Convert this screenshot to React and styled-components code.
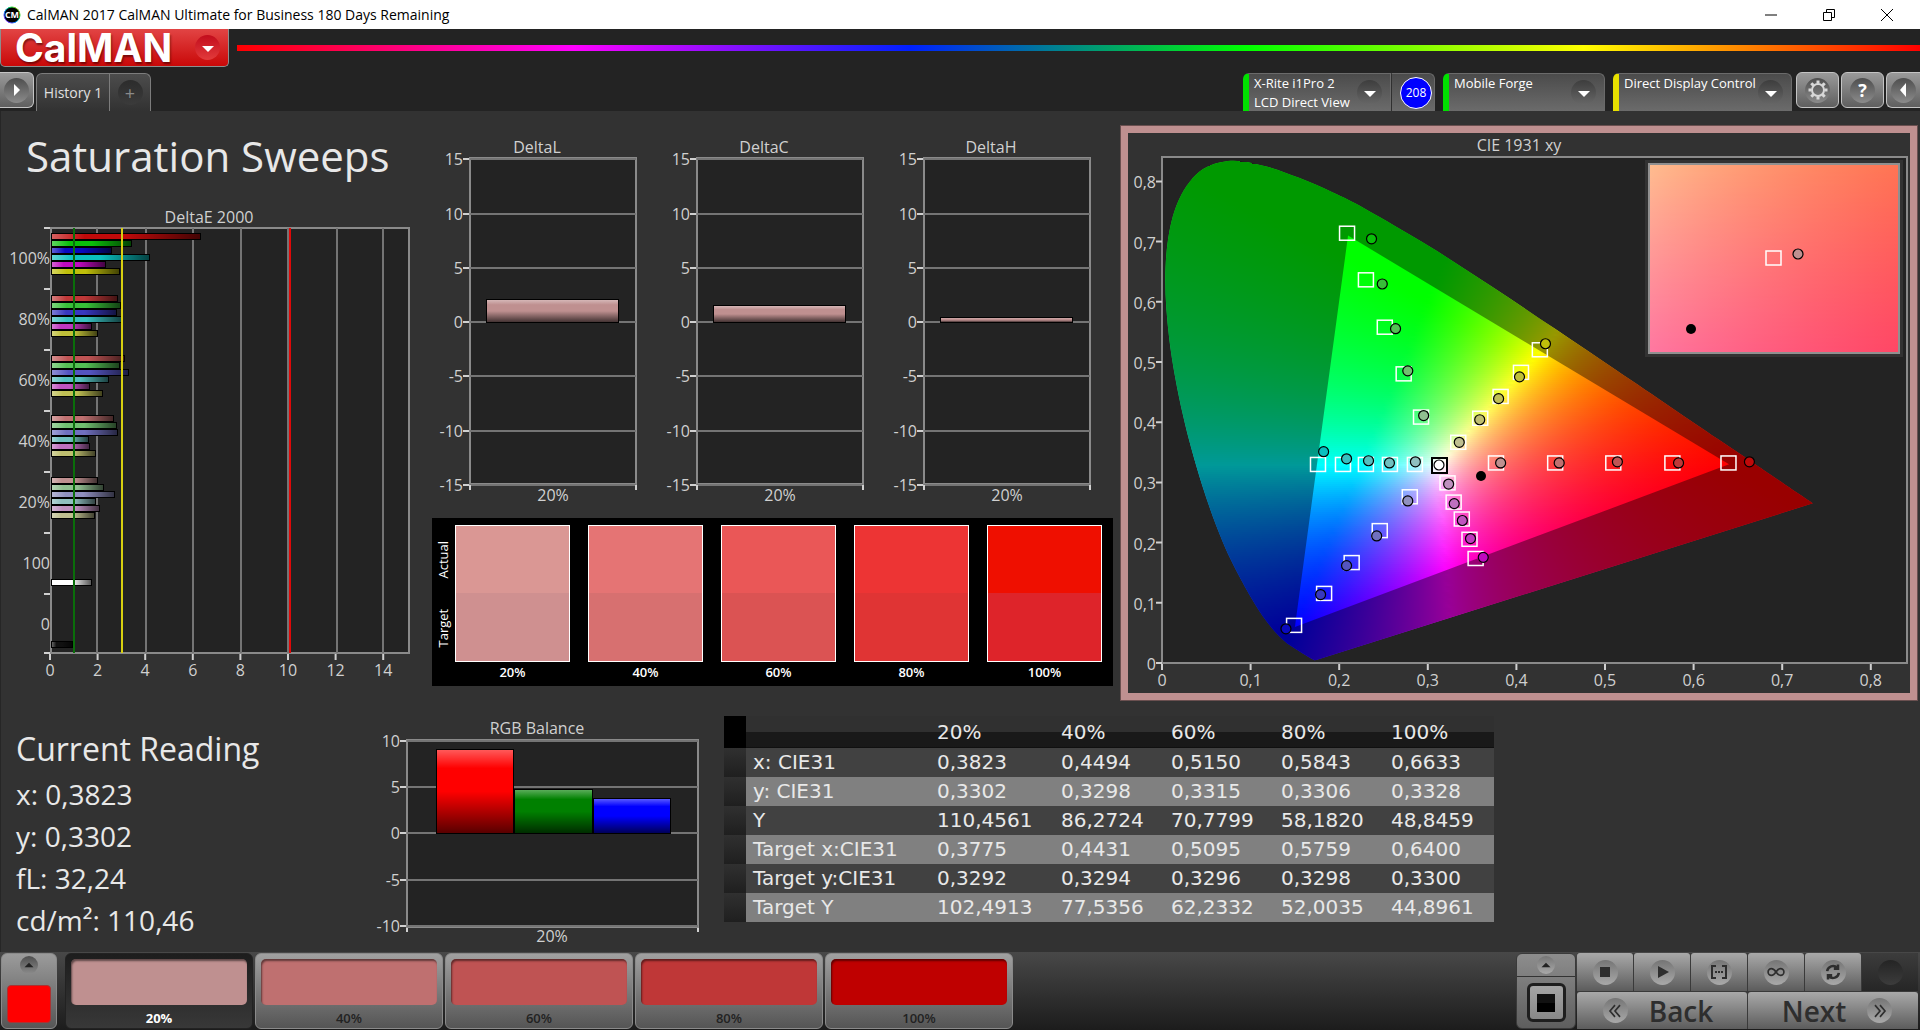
import React, { useState } from 'react'
import styled, { createGlobalStyle } from 'styled-components';

const Global = createGlobalStyle`
   * { box-sizing: border-box; }
   body { margin: 0; background: #323232; }
   body, button { font-family: "Open Sans", "Noto Sans", sans-serif; }
   button { margin: 0; padding: 0; cursor: pointer; }
`

const Screen = styled.div`
   display: flex;
   flex-direction: column;
   min-height: 100vh;
   color: #e8e8e8;
`

/* ---------- title bar ---------- */

const TitleBar = styled.header`
   display: flex;
   align-items: center;
   height: 29px;
   padding-left: 3px;
   gap: 6px;
   background: #fff;
   color: #000;
   font-size: 14px;
   line-height: 24px;
`

const WindowTitle = styled.span`
   flex: 1;
`

const WindowButtons = styled.div`
   display: flex;
   padding-right: 4px;
`

const WindowButton = styled.button`
   display: grid;
   place-items: center;
   width: 58px;
   height: 28px;
   border: 0;
   background: none;
`

/* ---------- toolbar ---------- */

const Toolbar = styled.div`
   background: #232323;
`

const BrandRow = styled.div`
   display: flex;
   align-items: center;
   gap: 8px;
   height: 38px;
`

const Brand = styled.button`
   display: flex;
   align-items: center;
   justify-content: space-between;
   width: 229px;
   height: 38px;
   padding: 0 8px 0 14px;
   border: 1px solid #8d8d8d;
   border-top: 0;
   border-radius: 0 0 5px 5px;
   background: linear-gradient(#e24444, #c90808);
   color: #fff;
   font: 700 39px/36px Inter, sans-serif;
   text-shadow: 1px 2px 2px rgba(60, 0, 0, 0.6);
`

const Rainbow = styled.div`
   flex: 1;
   height: 6px;
   background: linear-gradient(90deg, #f00 0%, #f0f 20%, #0020ff 40%, #0f0 60%, #ff0 80%, #f00 100%);
`

const TabRow = styled.div`
   display: flex;
   align-items: flex-start;
   height: 44px;
   padding-top: 5px;
`

const Spacer = styled.div`
   flex: 1;
`

const SideButton = styled.button`
   display: grid;
   place-items: center;
   width: ${({ $edge }) => ($edge ? '34px' : '43px')};
   height: 36px;
   margin-right: ${({ $edge }) => ($edge ? '0' : '2px')};
   border: 1px solid #c4c4c4;
   border-left-width: ${({ $edge }) => ($edge === 'left' ? '0' : '1px')};
   border-right-width: ${({ $edge }) => ($edge === 'right' ? '0' : '1px')};
   border-radius: ${({ $edge }) => ($edge === 'left' ? '0 6px 6px 0' : $edge === 'right' ? '6px 0 0 6px' : '6px')};
   background: linear-gradient(#9a9a9a, #5f5f5f);
`

const Tabs = styled.div`
   display: flex;
   height: 38px;
   margin: 1px 0 0 2px;
   border: 1px solid #7c7c7c;
   border-bottom: 0;
   border-radius: 6px 6px 0 0;
   background: linear-gradient(#4c4c4c, #323232);
`

const Tab = styled.button`
   display: grid;
   place-items: center;
   width: ${({ $wide }) => ($wide ? '73px' : '40px')};
   border: 0;
   border-right: ${({ $wide }) => ($wide ? '1px solid #7c7c7c' : '0')};
   background: none;
   color: #e0e0e0;
   font-size: 14px;
`

const Device = styled.button`
   display: flex;
   align-items: center;
   width: ${({ $width }) => $width}px;
   height: 38px;
   margin: 1px 8px 0 0;
   padding: 0 8px 0 5px;
   border: 1px solid #6a6a6a;
   border-bottom: 0;
   border-left: 6px solid ${({ $color }) => $color};
   border-radius: 6px 6px 0 0;
   background: linear-gradient(#4b4b4b, #6b6b6b);
   color: #fff;
   font-size: 13px;
   line-height: 19px;
   text-align: left;
`

const DeviceName = styled.span`
   flex: 1;
   height: 38px;
   white-space: nowrap;
`

const DeviceGroup = styled.div`
   display: flex;
   margin-right: 8px;

   ${Device} {
      margin-right: 0;
      border-radius: 6px 0 0 0;
   }
`

const Devices = styled.div`
   display: flex;
   margin-right: -4px;
`

const Counter = styled.button`
   display: grid;
   place-items: center;
   width: 44px;
   height: 38px;
   margin-top: 1px;
   padding-left: 6px;
   border: 1px solid #6a6a6a;
   border-bottom: 0;
   border-left-color: #303030;
   border-radius: 0 6px 0 0;
   background: linear-gradient(#4b4b4b, #6b6b6b);
`

const CounterBadge = styled.span`
   width: 32px;
   height: 32px;
   border: 1px solid #fff;
   border-radius: 50%;
   background: #00f;
   color: #fff;
   font-size: 12px;
   line-height: 30px;
   text-align: center;
`

/* ---------- workspace ---------- */

const Workspace = styled.main`
   flex: 1;
   background: #323232;
   box-shadow: inset 1px 0 #262626;
`

const ChartRow = styled.section`
   display: grid;
   grid-template-columns: 430fr 690fr 800fr;
   align-items: start;
   min-height: 599px;
`

const ReadingRow = styled.section`
   display: grid;
   grid-template-columns: 360fr 364fr 770fr 426fr;
   align-items: start;
`

const PageTitle = styled.h1`
   margin: 0;
   padding-left: 26px;
   font-size: 42px;
   font-weight: 400;
   line-height: 89px;
   white-space: nowrap;
`

const Chart = styled.svg`
   display: block;
   width: 100%;
   height: auto;
   font-family: "Open Sans", "Noto Sans", sans-serif;
   font-size: 16px;
   fill: #d0d0d0;
`

const MiddleColumn = styled.div`
   padding-top: 19px;
`

const DeltaRow = styled.div`
   display: grid;
   grid-template-columns: 227fr 227fr 227fr 9fr;
`

const SwatchPanel = styled.div`
   display: flex;
   gap: 4px;
   margin: 8px 7px 0 2px;
   padding: 7px 11px 0 3px;
   height: 168px;
   background: #000;
   color: #fff;
   font-size: 13px;
   font-weight: 600;
`

const SwatchAxis = styled.div`
   display: flex;
   flex-direction: column;
   width: 16px;
   height: 137px;
`

const AxisWord = styled.span`
   flex: 1;
   writing-mode: vertical-rl;
   transform: rotate(180deg);
   line-height: 16px;
   text-align: center;
   font-weight: 400;
`

const SwatchGrid = styled.div`
   flex: 1;
   display: grid;
   grid-template-columns: repeat(5, 1fr);
   column-gap: 18px;
`

const SwatchCell = styled.figure`
   margin: 0;
   text-align: center;
   line-height: 20px;
`

const SwatchColor = styled.div`
   height: 137px;
   border: 1px solid #fff;
   background: linear-gradient(${({ $actual, $target }) => `${$actual} 50%, ${$target} 50%`});
`

const CiePanel = styled.div`
   margin: 14px 2px 0 0;
   border: 8px solid #bf9090;
   outline: 1px solid #6b5050;
   outline-offset: -1px;
`

const Reading = styled.dl`
   margin: 0;
   padding: 18px 0 0 16px;
   font-size: 28px;
   line-height: 42px;
`

const ReadingTitle = styled.dt`
   padding-bottom: 3px;
   font-size: 32px;
`

const ReadingLine = styled.dd`
   margin: 0;
`

const DataTable = styled.table`
   width: 100%;
   margin-top: 6px;
   border-collapse: collapse;
   table-layout: fixed;
   font-family: "DejaVu Sans", sans-serif;
   font-size: 20px;
   line-height: 29px;
   text-align: left;
   white-space: nowrap;

   th, td {
      padding: 0 0 0 7px;
      font-weight: 400;
   }
`

const HeadRow = styled.tr`
   height: 32px;
   background: linear-gradient(#303030 0 50%, #191919 50% 95%, #0c0c0c);

   & > :first-child { background: #000; }
`

const BodyRow = styled.tr`
   background: ${({ $light }) => ($light ? '#808080' : '#414141')};

   & > :first-child { background: linear-gradient(#303030, #1f1f1f); }
`

const Col = styled.col`
   width: ${({ $share }) => ($share * 100) / 770}%;
`

/* ---------- footer ---------- */

const Footer = styled.footer`
   display: flex;
   gap: 2px;
   height: 78px;
   padding: 1px 2px 1px 1px;
   background: linear-gradient(#484848, #1c1c1c);
`

const PatternButton = styled.button`
   display: flex;
   flex-direction: column;
   align-items: center;
   justify-content: space-between;
   width: 56px;
   margin-right: 6px;
   padding: 2px 0 5px;
   border: 1px solid #8a8a8a;
   border-radius: 6px;
   background: linear-gradient(#9b9b9b, #565656);
`

const PatternColor = styled.span`
   width: 44px;
   height: 38px;
   border: 1px solid #a33;
   border-radius: 4px;
   background: #f00;
`

const LevelButton = styled.button`
   width: 188px;
   padding: 5px 6px 0;
   border: 1px solid ${({ $active }) => ($active ? '#222' : '#8a8a8a')};
   border-radius: 6px;
   background: ${({ $active }) => ($active ? 'linear-gradient(#1d1d1d, #383838)' : 'linear-gradient(#a0a0a0, #555)')};
   color: ${({ $active }) => ($active ? '#fff' : '#222')};
   font-size: 13px;
   font-weight: ${({ $active }) => ($active ? 700 : 600)};
   line-height: 26px;
`

const LevelColor = styled.span`
   display: block;
   width: 176px;
   height: 46px;
   margin-left: -1px;
   border-radius: 5px;
   background: ${({ $color }) => $color};
   box-shadow: inset 1px 2px 2px rgba(0, 0, 0, 0.5);
`

const WindowSize = styled.div`
   display: flex;
   flex-direction: column;
   width: 60px;
   border: 1px solid #3a3a3a;
   border-radius: 6px;
   background: linear-gradient(#8d8d8d, #5e5e5e);
   overflow: hidden;
`

const SizeButton = styled.button`
   display: grid;
   place-items: center;
   flex: ${({ $grow }) => ($grow ? 1 : '0 0 22px')};
   border: 0;
   border-top: ${({ $grow }) => ($grow ? '1px solid #333' : '0')};
   background: none;
`

const SizeFrame = styled.span`
   display: grid;
   place-items: center;
   width: 39px;
   height: 39px;
   border: 3px solid #1e1e1e;
   border-radius: 6px;
   background: linear-gradient(#a5a5a5, #888);

   &::after {
      content: '';
      width: 18px;
      height: 18px;
      background: linear-gradient(#111 50%, #000 50%);
   }
`

const Transport = styled.div`
   display: grid;
   grid-template-columns: repeat(6, 56px);
   grid-template-rows: 38px 37px;
   gap: 1px;
   margin-left: -1px;
   background: #3a3a3a;
`

const TransportButton = styled.button`
   display: flex;
   align-items: center;
   justify-content: center;
   gap: 21px;
   grid-column: span ${({ $span }) => $span || 1};
   padding: ${({ $lean }) => ($lean === 'left' ? '0 8px 0 0' : $lean === 'right' ? '0 0 0 8px' : '0')};
   border: 0;
   border-radius: 3px 3px 0 0;
   background: ${({ disabled }) => (disabled ? 'linear-gradient(#3c3c3c, #262626)' : 'linear-gradient(#a9a9a9, #5c5c5c)')};
   color: #2e2e2e;
   font-size: 28px;
   font-weight: 600;
   line-height: 36px;
`

/* round dimple that sits behind most of the small icons */
const Dimple = styled.span`
   display: grid;
   place-items: center;
   width: ${({ $size }) => $size || 25}px;
   height: ${({ $size }) => $size || 25}px;
   border-radius: 50%;
   background: ${({ $tone }) => tones[$tone || 'grey']};
   color: ${({ $tone }) => ($tone === 'flat' ? '#8a8a8a' : '#fff')};
   font-size: 18px;
   font-weight: 400;
   line-height: 24px;
`

const tones = {
   grey: 'linear-gradient(#4e4e4e, #8b8b8b)',
   dark: 'linear-gradient(#3d3d3d, #676767)',
   light: 'linear-gradient(#757575, #a9a9a9)',
   red: 'linear-gradient(#c20c1c, #e23b3b)',
   flat: 'linear-gradient(#2c2c2c, #3b3b3b)',
   off: 'linear-gradient(#242424, #3c3c3c)',
}

const Icon = ({ d, size = 24, fill = 'none', stroke = 'none', width = 2 }) => (
   <svg width={size} height={size} viewBox="0 0 24 24" fill={fill} stroke={stroke} strokeWidth={width} aria-hidden="true">
      <path d={d} />
   </svg>
)

const icons = {
   down: 'M6 10h12l-6 6z',
   up: 'M6 15h12l-6-6z',
   right: 'M9 6v12l6-6z',
   left: 'M14 5v14l-6-7z',
   stop: 'M7 7h10v10H7z',
   play: 'M8 6v12l11-6z',
   range: 'M9 6H5v12h4M15 6h4v12h-4M8 12h2M11 12h2M14 12h2',
   loop: 'M12 12c-2-3-3.500-4-5.500-4a4 4 0 0 0 0 8c2 0 3.500-1 5.500-4s3.500-4 5.500-4a4 4 0 0 1 0 8c-2 0-3.500-1-5.500-4z',
   refresh: 'M5 11a7 7 0 0 1 12-4M19 13a7 7 0 0 1-12 4M18 3v5h-5M6 21v-5h5',
   back: 'M12 5l-6 7 6 7M18 5l-6 7 6 7',
   next: 'M6 5l6 7-6 7M12 5l6 7-6 7',
}

const Gear = () => (
   <svg width="22" height="22" viewBox="-11 -11 22 22" fill="none" stroke="#d8d8d8" aria-hidden="true">
      <circle r="6" strokeWidth="2" />
      {[0, 45, 90, 135, 180, 225, 270, 315].map(a => (
         <path key={a} d="M0-6.500V-9.500" strokeWidth="3" transform={`rotate(${a})`} />
      ))}
   </svg>
)

const AppIcon = () => (
   <svg width="18" height="18" viewBox="0 0 18 18" aria-hidden="true">
      <defs>
         <linearGradient id="ring" x1="0" y1="1" x2="1" y2="0">
            <stop offset="0" stopColor="#a0f" />
            <stop offset="0.4" stopColor="#08f" />
            <stop offset="0.7" stopColor="#0d4" />
            <stop offset="1" stopColor="#fb0" />
         </linearGradient>
      </defs>
      <circle cx="9" cy="9" r="8" fill="#000" stroke="url(#ring)" strokeWidth="1" />
      <text x="9" y="12" textAnchor="middle" fontSize="9" fontWeight="700" fontFamily="Open Sans" fill="#fff">CM</text>
   </svg>
)

/* ---------- data ---------- */

const low = { '20%': 144, '40%': 112, '60%': 84, '80%': 56, '100%': 10 }

const hues = ['red', 'green', 'blue', 'cyan', 'magenta', 'yellow']
const masks = {
   red: [1, 0, 0],
   green: [0, 1, 0],
   blue: [0, 0, 1],
   cyan: [0, 1, 1],
   magenta: [1, 0, 1],
   yellow: [1, 1, 0],
}

const shade = (hue, level) => `rgb(${masks[hue].map(on => (on ? 191 : low[level])).join(',')})`

const levels = [
   { name: '20%', color: '#bf9090', actual: '#da9794', target: '#cf9090' },
   { name: '40%', color: '#bf7070', actual: '#e57474', target: '#d77070' },
   { name: '60%', color: '#bf5353', actual: '#ea5757', target: '#db5353' },
   { name: '80%', color: '#bf3737', actual: '#ed3434', target: '#e03434' },
   { name: '100%', color: '#bf0000', actual: '#ef0f00', target: '#de242a' },
]

/* right edge of every DeltaE bar, in chart units */
const deltaE = [
   { name: '100%', top: 233, ends: [201, 132, 112, 150, 106, 120] },
   { name: '80%', top: 295, ends: [118, 121, 117, 122, 92, 98] },
   { name: '60%', top: 355, ends: [125, 120, 129, 109, 90, 103] },
   { name: '40%', top: 415, ends: [114, 117, 118, 89, 90, 96] },
   { name: '20%', top: 477, ends: [98, 104, 115, 96, 100, 95] },
]

const deltas = [
   { title: 'DeltaL', value: 2.1 },
   { title: 'DeltaC', value: 1.6 },
   { title: 'DeltaH', value: 0.5 },
]

const columns = ['20%', '40%', '60%', '80%', '100%']
const rows = [
   ['x: CIE31', '0,3823', '0,4494', '0,5150', '0,5843', '0,6633'],
   ['y: CIE31', '0,3302', '0,3298', '0,3315', '0,3306', '0,3328'],
   ['Y', '110,4561', '86,2724', '70,7799', '58,1820', '48,8459'],
   ['Target x:CIE31', '0,3775', '0,4431', '0,5095', '0,5759', '0,6400'],
   ['Target y:CIE31', '0,3292', '0,3294', '0,3296', '0,3298', '0,3300'],
   ['Target Y', '102,4913', '77,5356', '62,2332', '52,0035', '44,8961'],
]

/* [target x, target y, measured x, measured y] from 20% to 100% */
const sweeps = {
   green: [
      [0.2918, 0.4085, 0.2953, 0.411], [0.2722, 0.4803, 0.2774, 0.4853], [0.2509, 0.5578, 0.2636, 0.5553],
      [0.2296, 0.6365, 0.2486, 0.6296], [0.2083, 0.7139, 0.2365, 0.7046],
   ],
   yellow: [
      [0.3338, 0.3666, 0.3355, 0.3666], [0.3586, 0.4066, 0.3586, 0.4041], [0.3816, 0.4428, 0.3799, 0.4391],
      [0.4046, 0.4828, 0.4035, 0.4753], [0.4259, 0.5203, 0.4328, 0.5303],
   ],
   cyan: [
      [0.2849, 0.3298, 0.286, 0.3342], [0.2567, 0.3298, 0.2567, 0.3323], [0.2296, 0.3298, 0.2331, 0.336],
      [0.2037, 0.3298, 0.2083, 0.3392], [0.1755, 0.3298, 0.1824, 0.351],
   ],
   red: [
      [0.3764, 0.3323, 0.3822, 0.3323], [0.4432, 0.3323, 0.4483, 0.3323], [0.5088, 0.3323, 0.514, 0.3342],
      [0.5755, 0.3323, 0.583, 0.3323], [0.6388, 0.3323, 0.663, 0.3342],
   ],
   magenta: [
      [0.3217, 0.2992, 0.3235, 0.2973], [0.3286, 0.2673, 0.3298, 0.2648], [0.3378, 0.2392, 0.339, 0.2367],
      [0.3465, 0.2055, 0.3482, 0.2067], [0.3534, 0.1736, 0.3626, 0.1755],
   ],
   blue: [
      [0.2791, 0.2761, 0.2774, 0.2692], [0.2452, 0.2199, 0.2423, 0.2111], [0.2135, 0.1668, 0.2083, 0.1618],
      [0.1824, 0.1156, 0.179, 0.1137], [0.1485, 0.0625, 0.1399, 0.0568],
   ],
}

const locus = [
   [0.1741, 0.005], [0.1714, 0.0051], [0.1644, 0.0109], [0.1566, 0.0177], [0.144, 0.0297], [0.1355, 0.0399],
   [0.1241, 0.0578], [0.1096, 0.0868], [0.0913, 0.1327], [0.0687, 0.2007], [0.0454, 0.295], [0.0235, 0.4127],
   [0.0082, 0.5384], [0.0039, 0.6548], [0.0139, 0.7502], [0.0389, 0.812], [0.0743, 0.8338], [0.1142, 0.8262],
   [0.1547, 0.8059], [0.1929, 0.7816], [0.2296, 0.7543], [0.3016, 0.6923], [0.3731, 0.6245], [0.4441, 0.5547],
   [0.5125, 0.4866], [0.5752, 0.4242], [0.627, 0.3725], [0.6658, 0.334], [0.6915, 0.3083], [0.719, 0.2809],
   [0.7347, 0.2653],
]

const px = x => 1162 + 886 * x
const py = y => 663 - 602 * y

/* linear sRGB of a chromaticity, brightest channel at full */
const chroma = (x, y) => {
   const X = x / y
   const Z = (1 - x - y) / y
   const rgb = [
      3.2406 * X - 1.5372 - 0.4986 * Z,
      -0.9689 * X + 1.8758 + 0.0415 * Z,
      0.0557 * X - 0.204 + 1.057 * Z,
   ].map(v => Math.max(v, 0))
   const top = Math.max(...rgb)
   return `rgb(${rgb.map(v => Math.round((255 * v) / top)).join(',')})`
}

const smooth = pts => {
   let d = `M${pts[0]}`
   for (let i = 0; i < pts.length - 1; i++) {
      const a = pts[i - 1] || pts[i]
      const b = pts[i]
      const c = pts[i + 1]
      const e = pts[i + 2] || c
      d += `C${b[0] + (c[0] - a[0]) / 6},${b[1] + (c[1] - a[1]) / 6} ${c[0] - (e[0] - b[0]) / 6},${c[1] - (e[1] - b[1]) / 6} ${c[0]},${c[1]}`
   }
   return d + 'Z'
}

const locusPath = smooth(locus.map(([x, y]) => [px(x), py(y)]))
const gamutPath = `M${px(0.64)},${py(0.33)}L${px(0.21)},${py(0.71)}L${px(0.15)},${py(0.06)}Z`

/* horizontal extent of the locus at a height */
const span = y => {
   const hits = []
   locus.forEach((p, i) => {
      const q = locus[(i + 1) % locus.length]
      if ((p[1] - y) * (q[1] - y) <= 0 && p[1] !== q[1]) {
         hits.push(p[0] + ((y - p[1]) / (q[1] - p[1])) * (q[0] - p[0]))
      }
   })
   return hits.length ? [Math.min(...hits) - 0.01, Math.max(...hits) + 0.01] : null
}

/* the colour field is painted as thin strips, each with its own gradient */
const strips = []
for (let top = 158; top < 664; top += 2) {
   const y = Math.min(Math.max((663 - top - 1) / 602, 0.006), 0.833)
   const [x1, x2] = span(y) || [0.02, 0.14]
   const count = Math.ceil((x2 - x1) / 0.01)
   const stops = Array.from({ length: count + 1 }, (_, i) => chroma(x1 + ((x2 - x1) * i) / count, y))
   strips.push({ top, left: px(x1), width: px(x2) - px(x1), stops })
}

const insetStrips = Array.from({ length: 95 }, (_, r) => {
   const y = 0.3292 + (258 - (164 + 2 * r + 1)) / 3534
   return {
      top: 164 + 2 * r,
      left: 1649,
      width: 250,
      stops: Array.from({ length: 13 }, (_, i) => chroma(0.3775 + (1649 + (250 * i) / 12 - 1773) / 5200, y)),
   }
})

/* ---------- charts ---------- */

const Strips = ({ id, list }) => list.map((s, n) => (
   <React.Fragment key={n}>
      <linearGradient id={`${id}${n}`}>
         {s.stops.map((color, i) => (
            <stop key={i} offset={i / (s.stops.length - 1)} stopColor={color} />
         ))}
      </linearGradient>
      <rect x={s.left} y={s.top} width={s.width} height="2" fill={`url(#${id}${n})`} shapeRendering="crispEdges" />
   </React.Fragment>
))

const Gloss = ({ id, vertical }) => (
   <linearGradient id={id} x1="0" y1="0" x2={vertical ? 0 : 1} y2={vertical ? 1 : 0}>
      <stop offset="0" stopColor="#fff" stopOpacity="0.35" />
      <stop offset="0.22" stopColor="#fff" stopOpacity="0" />
      <stop offset="0.5" stopColor="#000" stopOpacity="0" />
      <stop offset="1" stopColor="#000" stopOpacity="0.65" />
   </linearGradient>
)

const Bar = ({ x, y, w, h, color, gloss }) => (
   <g>
      <rect x={x} y={y} width={w} height={h} fill="#000" />
      <rect x={x + 1} y={y + 1} width={w - 2} height={h - 2} fill={color} />
      <rect x={x + 1} y={y + 1} width={w - 2} height={h - 2} fill={`url(#${gloss})`} />
   </g>
)

const GridLine = ({ d }) => <path d={d} stroke="#747474" strokeWidth="2" fill="none" />
const Tick = ({ d }) => <path d={d} stroke="#d0d0d0" strokeWidth="2" fill="none" />

const DeltaEChart = () => {
   const names = ['100%', '80%', '60%', '40%', '20%', '100', '0']
   return (
      <Chart viewBox="0 200 430 510" role="img" aria-label="DeltaE 2000">
         <Gloss id="glossAcross" />
         <text x="209" y="223" textAnchor="middle">DeltaE 2000</text>
         <rect x="51" y="228" width="358" height="425" fill="#232323" stroke="#8a8a8a" strokeWidth="2" />
         {[97, 146, 193, 241, 288, 337, 383].map(x => <GridLine key={x} d={`M${x} 228V653`} />)}
         {[228, 289, 350, 411, 472, 533, 594, 653].map(y => <Tick key={y} d={`M44 ${y}h6`} />)}
         {names.map((name, i) => (
            <text key={i} x="50" y={264 + 61 * i} textAnchor="end">{name}</text>
         ))}
         {[0, 2, 4, 6, 8, 10, 12, 14].map(v => (
            <g key={v}>
               <Tick d={`M${50 + 24 * v - v * 0.2} 654v6`} />
               <text x={50 + 24 * v - v * 0.2} y="676" textAnchor="middle">{v}</text>
            </g>
         ))}
         {deltaE.map(group => group.ends.map((end, i) => (
            <Bar key={group.name + i} x={51} y={group.top + 7 * i} w={end - 51} h={7} color={shade(hues[i], group.name)} gloss="glossAcross" />
         )))}
         <Bar x={51} y={579} w={41} h={7} color="#fff" gloss="glossAcross" />
         <Bar x={51} y={641} w={22} h={7} color="#111" gloss="glossAcross" />
         <path d="M74 228V653" stroke="#0a6e0a" strokeWidth="2" />
         <path d="M122 228V653" stroke="#d8d010" strokeWidth="2" />
         <path d="M290 228V653" stroke="#e00808" strokeWidth="2" />
      </Chart>
   )
}

const DeltaChart = ({ title, value }) => {
   const gloss = `gloss${title}`
   const at = v => 322 - 11 * v + v * 0.15
   return (
      <Chart viewBox="0 130 227 380" role="img" aria-label={title}>
         <Gloss id={gloss} vertical />
         <text x="107" y="153" textAnchor="middle">{title}</text>
         <rect x="40" y="158" width="166" height="326" fill="#232323" stroke="#8a8a8a" strokeWidth="2" />
         {[15, 10, 5, 0, -5, -10, -15].map(v => (
            <g key={v}>
               <GridLine d={`M40 ${Math.round(at(v))}h166`} />
               <Tick d={`M33 ${Math.round(at(v))}h6`} />
               <text x="33" y={at(v) + 6} textAnchor="end">{v}</text>
            </g>
         ))}
         <Tick d="M40 485v5M206 485v5" />
         <text x="123" y="501" textAnchor="middle">20%</text>
         <Bar x={56} y={Math.round(at(value))} w={133} h={323 - Math.round(at(value))} color="#bf9090" gloss={gloss} />
      </Chart>
   )
}

const RgbChart = () => (
   <Chart viewBox="360 710 364 242" role="img" aria-label="RGB Balance">
      <Gloss id="glossRgb" vertical />
      <text x="537" y="734" textAnchor="middle">RGB Balance</text>
      <rect x="407" y="740" width="291" height="187" fill="#232323" stroke="#8a8a8a" strokeWidth="2" />
      {[[10, 741], [5, 787], [0, 833], [-5, 880], [-10, 926]].map(([v, y]) => (
         <g key={v}>
            <GridLine d={`M407 ${y}h291`} />
            <Tick d={`M400 ${y}h6`} />
            <text x="400" y={y + 6} textAnchor="end">{v}</text>
         </g>
      ))}
      <Tick d="M407 928v4M698 928v4" />
      <text x="552" y="942" textAnchor="middle">20%</text>
      <Bar x={436} y={749} w={78} h={85} color="#f00" gloss="glossRgb" />
      <Bar x={514} y={789} w={79} h={45} color="#008000" gloss="glossRgb" />
      <Bar x={593} y={798} w={78} h={36} color="#00f" gloss="glossRgb" />
   </Chart>
)

const Target = ({ x, y }) => (
   <rect x={x - 7} y={y - 7} width="15" height="14" fill="none" stroke="#fff" strokeWidth="1.5" />
)

const Measured = ({ x, y, fill }) => <circle cx={x} cy={y} r="5" fill={fill} stroke="#000" strokeWidth="1.2" />

const CieChart = () => (
   <Chart viewBox="1128 133 782 560" role="img" aria-label="CIE 1931 xy">
      <clipPath id="locus"><path d={locusPath} /></clipPath>
      <text x="1519" y="151" textAnchor="middle">CIE 1931 xy</text>
      <rect x="1162" y="157" width="745" height="506" fill="#232323" stroke="#8a8a8a" strokeWidth="2" />
      <g clipPath="url(#locus)">
         <Strips id="field" list={strips} />
         <path d={`${locusPath}${gamutPath}`} fill="#000" fillOpacity="0.4" fillRule="evenodd" />
      </g>
      {[0, 1, 2, 3, 4, 5, 6, 7, 8].map(v => (
         <g key={v}>
            <Tick d={`M${px(v / 10)} 664v6M1156 ${py(v / 10)}h6`} />
            <text x={px(v / 10)} y="686" textAnchor="middle">{v ? `0,${v}` : 0}</text>
            <text x="1156" y={py(v / 10) + 7} textAnchor="end">{v ? `0,${v}` : 0}</text>
         </g>
      ))}
      {hues.map(hue => sweeps[hue].map(([x, y], i) => <Target key={hue + i} x={px(x)} y={py(y)} />))}
      <rect x="1432" y="458" width="15" height="15" fill="none" stroke="#000" strokeWidth="2" />
      <rect x="1434" y="460" width="11" height="11" fill="none" stroke="#fff" strokeWidth="1" />
      {hues.map(hue => sweeps[hue].map(([, , x, y], i) => (
         <Measured key={hue + i} x={px(x)} y={py(y)} fill={shade(hue, columns[i])} />
      )))}
      <Measured x={1439} y={465} fill="#fff" />
      <circle cx="1481" cy="476" r="5" fill="#000" />

      <rect x="1645" y="160" width="258" height="197" fill="#323232" />
      <Strips id="inset" list={insetStrips} />
      <rect x="1649" y="164" width="250" height="189" fill="none" stroke="#909090" strokeWidth="2" />
      <Target x={1773} y={258} />
      <Measured x={1798} y={254} fill="#bf9090" />
      <circle cx="1691" cy="329" r="5" fill="#000" />
   </Chart>
)

/* ---------- page ---------- */

const App = () => {

   const [active, setActive] = useState('20%')

   return (
      <>
         <Global />
         <Screen>
            <TitleBar>
               <AppIcon />
               <WindowTitle>CalMAN 2017 CalMAN Ultimate for Business 180 Days Remaining</WindowTitle>
               <WindowButtons>
                  <WindowButton aria-label="Minimize"><Icon d="M6 12h12" stroke="#000" width={1} /></WindowButton>
                  <WindowButton aria-label="Restore"><Icon d="M6.500 9.500h8v8h-8zM9.500 9V6.500h8v8H15" stroke="#000" width={1} /></WindowButton>
                  <WindowButton aria-label="Close"><Icon d="M6 6l12 12M18 6L6 18" stroke="#000" width={1} /></WindowButton>
               </WindowButtons>
            </TitleBar>

            <Toolbar>
               <BrandRow>
                  <Brand>CalMAN <Dimple $tone="red"><Icon d={icons.down} fill="#fff" /></Dimple></Brand>
                  <Rainbow />
               </BrandRow>
               <TabRow>
                  <SideButton $edge="left" aria-label="Run"><Dimple><Icon d={icons.right} fill="#fff" /></Dimple></SideButton>
                  <Tabs>
                     <Tab $wide>History 1</Tab>
                     <Tab aria-label="Add tab"><Dimple $tone="flat">+</Dimple></Tab>
                  </Tabs>
                  <Spacer />
                  <Devices>
                     <DeviceGroup>
                        <Device $width={148} $color="#00e000">
                           <DeviceName>X-Rite i1Pro 2<br />LCD Direct View</DeviceName>
                           <Dimple $tone="dark"><Icon d={icons.down} fill="#fff" /></Dimple>
                        </Device>
                        <Counter><CounterBadge>208</CounterBadge></Counter>
                     </DeviceGroup>
                     <Device $width={162} $color="#00e000">
                        <DeviceName>Mobile Forge</DeviceName>
                        <Dimple $tone="dark"><Icon d={icons.down} fill="#fff" /></Dimple>
                     </Device>
                     <Device $width={179} $color="#e8e000">
                        <DeviceName>Direct Display Control</DeviceName>
                        <Dimple $tone="dark"><Icon d={icons.down} fill="#fff" /></Dimple>
                     </Device>
                  </Devices>
                  <SideButton aria-label="Settings"><Dimple><Gear /></Dimple></SideButton>
                  <SideButton aria-label="Help"><Dimple><b>?</b></Dimple></SideButton>
                  <SideButton $edge="right" aria-label="Collapse"><Dimple><Icon d={icons.left} fill="#fff" /></Dimple></SideButton>
               </TabRow>
            </Toolbar>

            <Workspace>
               <ChartRow>
                  <div>
                     <PageTitle>Saturation Sweeps</PageTitle>
                     <DeltaEChart />
                  </div>
                  <MiddleColumn>
                     <DeltaRow>
                        {deltas.map(d => <DeltaChart key={d.title} {...d} />)}
                     </DeltaRow>
                     <SwatchPanel>
                        <SwatchAxis>
                           <AxisWord>Actual</AxisWord>
                           <AxisWord>Target</AxisWord>
                        </SwatchAxis>
                        <SwatchGrid>
                           {levels.map(l => (
                              <SwatchCell key={l.name}>
                                 <SwatchColor $actual={l.actual} $target={l.target} />
                                 <figcaption>{l.name}</figcaption>
                              </SwatchCell>
                           ))}
                        </SwatchGrid>
                     </SwatchPanel>
                  </MiddleColumn>
                  <CiePanel><CieChart /></CiePanel>
               </ChartRow>

               <ReadingRow>
                  <Reading>
                     <ReadingTitle>Current Reading</ReadingTitle>
                     <ReadingLine>x: 0,3823</ReadingLine>
                     <ReadingLine>y: 0,3302</ReadingLine>
                     <ReadingLine>fL: 32,24</ReadingLine>
                     <ReadingLine>cd/m²: 110,46</ReadingLine>
                  </Reading>
                  <RgbChart />
                  <DataTable>
                     <colgroup>
                        {[22, 184, 124, 110, 110, 110, 110].map((share, i) => <Col key={i} $share={share} />)}
                     </colgroup>
                     <thead>
                        <HeadRow>
                           <th />
                           <th />
                           {columns.map(c => <th key={c} scope="col">{c}</th>)}
                        </HeadRow>
                     </thead>
                     <tbody>
                        {rows.map(([name, ...cells], i) => (
                           <BodyRow key={name} $light={i % 2 === 1}>
                              <td />
                              <th scope="row">{name}</th>
                              {cells.map((c, n) => <td key={n}>{c}</td>)}
                           </BodyRow>
                        ))}
                     </tbody>
                  </DataTable>
               </ReadingRow>
            </Workspace>

            <Footer>
               <PatternButton aria-label="Pattern colour">
                  <Dimple $size={18}><Icon d={icons.up} size={18} fill="#222" /></Dimple>
                  <PatternColor />
               </PatternButton>
               {levels.map(l => (
                  <LevelButton key={l.name} $active={active === l.name} onClick={() => setActive(l.name)}>
                     <LevelColor $color={l.color} />
                     {l.name}
                  </LevelButton>
               ))}
               <Spacer />
               <WindowSize>
                  <SizeButton aria-label="More sizes"><Dimple $size={18} $tone="light"><Icon d={icons.up} size={18} fill="#222" /></Dimple></SizeButton>
                  <SizeButton $grow aria-label="Window size"><SizeFrame /></SizeButton>
               </WindowSize>
               <Transport>
                  <TransportButton aria-label="Stop"><Dimple $tone="light"><Icon d={icons.stop} fill="#2e2e2e" /></Dimple></TransportButton>
                  <TransportButton aria-label="Play"><Dimple $tone="light"><Icon d={icons.play} fill="#2e2e2e" /></Dimple></TransportButton>
                  <TransportButton aria-label="Read series"><Dimple $tone="light"><Icon d={icons.range} stroke="#2e2e2e" /></Dimple></TransportButton>
                  <TransportButton aria-label="Continuous"><Dimple $tone="light"><Icon d={icons.loop} size={20} stroke="#2e2e2e" /></Dimple></TransportButton>
                  <TransportButton aria-label="Refresh"><Dimple $tone="light"><Icon d={icons.refresh} size={20} stroke="#2e2e2e" width={3} /></Dimple></TransportButton>
                  <TransportButton disabled aria-label="Idle"><Dimple $tone="off" /></TransportButton>
                  <TransportButton $span={3} $lean="left">
                     <Dimple $tone="light"><Icon d={icons.back} size={20} stroke="#2e2e2e" /></Dimple>
                     Back
                  </TransportButton>
                  <TransportButton $span={3} $lean="right">
                     Next
                     <Dimple $tone="light"><Icon d={icons.next} size={20} stroke="#2e2e2e" /></Dimple>
                  </TransportButton>
               </Transport>
            </Footer>
         </Screen>
      </>
   )
}

export default App
